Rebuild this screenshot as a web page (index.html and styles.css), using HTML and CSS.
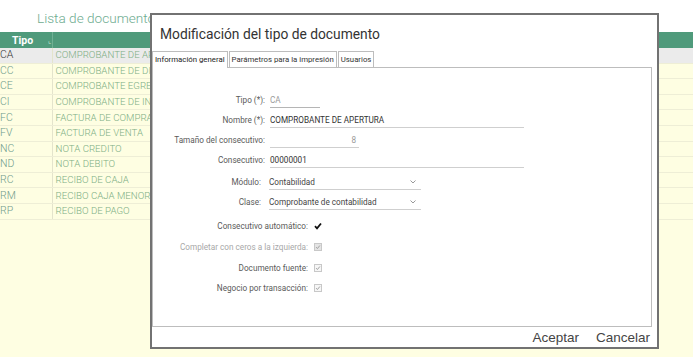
FILE: index.html
```html
<!DOCTYPE html>
<html lang="es">
<head>
    <meta charset="UTF-8">
    <title>Tipos de documento</title>
    <link rel="stylesheet" href="styles.css">
</head>
<body>
    <div class="page">
        <h1 class="list-title">Lista de documentos</h1>
        <table class="grid">
            <thead>
                <tr>
                    <th class="col-code">Tipo <span class="sort">&#8990;</span></th>
                    <th></th>
                </tr>
            </thead>
            <tbody>
                <tr class="selected"><td class="code">CA</td><td>COMPROBANTE DE APERTURA</td></tr>
                <tr><td class="code">CC</td><td>COMPROBANTE DE DIARIO</td></tr>
                <tr><td class="code">CE</td><td>COMPROBANTE EGRESO</td></tr>
                <tr><td class="code">CI</td><td>COMPROBANTE DE INGRESO</td></tr>
                <tr><td class="code">FC</td><td>FACTURA DE COMPRA</td></tr>
                <tr><td class="code">FV</td><td>FACTURA DE VENTA</td></tr>
                <tr><td class="code">NC</td><td>NOTA CREDITO</td></tr>
                <tr><td class="code">ND</td><td>NOTA DEBITO</td></tr>
                <tr><td class="code">RC</td><td>RECIBO DE CAJA</td></tr>
                <tr><td class="code">RM</td><td>RECIBO CAJA MENOR</td></tr>
                <tr><td class="code">RP</td><td>RECIBO DE PAGO</td></tr>
            </tbody>
        </table>
    </div>

    <div class="dialog">
        <h2 class="dialog-title">Modificación del tipo de documento</h2>
        <div class="tabs">
            <span class="tab active">Información general</span>
            <span class="tab">Parámetros para la impresión</span>
            <span class="tab">Usuarios</span>
        </div>
        <div class="panel">
            <div class="form">
                <div class="row">
                    <label>Tipo (*):</label>
                    <span class="field short muted">CA</span>
                </div>
                <div class="row">
                    <label>Nombre (*):</label>
                    <span class="field wide">COMPROBANTE DE APERTURA</span>
                </div>
                <div class="row">
                    <label>Tamaño del consecutivo:</label>
                    <span class="field medium muted number">8</span>
                </div>
                <div class="row">
                    <label>Consecutivo:</label>
                    <span class="field wide">00000001</span>
                </div>
                <div class="row select-row first-select">
                    <label>Módulo:</label>
                    <span class="field select">Contabilidad
                        <svg class="chevron" width="6" height="4" viewBox="0 0 6 4"><path d="M0.5 0.5 L3 3 L5.5 0.5" fill="none" stroke="#999" stroke-width="1"/></svg>
                    </span>
                </div>
                <div class="row select-row">
                    <label>Clase:</label>
                    <span class="field select">Comprobante de contabilidad
                        <svg class="chevron" width="6" height="4" viewBox="0 0 6 4"><path d="M0.5 0.5 L3 3 L5.5 0.5" fill="none" stroke="#999" stroke-width="1"/></svg>
                    </span>
                </div>

                <div class="checks">
                    <div class="check-row">
                        <label>Consecutivo automático:</label>
                        <span class="box on">
                            <svg width="8" height="8" viewBox="0 0 8 8"><path d="M1 4.2 L3 6.3 L7 1.5" fill="none" stroke="#111" stroke-width="1.8"/></svg>
                        </span>
                    </div>
                    <div class="check-row disabled">
                        <label>Completar con ceros a la izquierda:</label>
                        <span class="box off filled">
                            <svg width="8" height="8" viewBox="0 0 8 8"><path d="M1.5 4.2 L3.2 6 L6.5 2" fill="none" stroke="#999" stroke-width="1.2"/></svg>
                        </span>
                    </div>
                    <div class="check-row">
                        <label>Documento fuente:</label>
                        <span class="box off">
                            <svg width="8" height="8" viewBox="0 0 8 8"><path d="M1.5 4.2 L3.2 6 L6.5 2" fill="none" stroke="#999" stroke-width="1.2"/></svg>
                        </span>
                    </div>
                    <div class="check-row">
                        <label>Negocio por transacción:</label>
                        <span class="box off">
                            <svg width="8" height="8" viewBox="0 0 8 8"><path d="M1.5 4.2 L3.2 6 L6.5 2" fill="none" stroke="#999" stroke-width="1.2"/></svg>
                        </span>
                    </div>
                </div>
            </div>
        </div>
        <div class="actions">
            <button class="link-btn">Aceptar</button>
            <button class="link-btn">Cancelar</button>
        </div>
    </div>
</body>
</html>
```

FILE: styles.css
```css
body {
    margin: 0;
    padding: 0;
    font-family: Roboto, "Liberation Sans", sans-serif;
    background-color: #fefee2;
    width: 693px;
    height: 357px;
    overflow: hidden;
    position: relative;
}

.page {
    background-color: #fefee2;
}

.list-title {
    margin: 0;
    height: 32px;
    padding-left: 37px;
    line-height: 36px;
    font-size: 13.6px;
    font-weight: 300;
    color: #6eac90;
    background-color: #fff;
}

/* list of documents */

.grid {
    width: 100%;
    border-collapse: collapse;
    table-layout: fixed;
}

.grid th {
    height: 16px;
    padding: 0;
    background-color: #4f9a7b;
    color: #fff;
    font-size: 10.5px;
    font-weight: bold;
    text-align: left;
}

.grid th.col-code {
    width: 52px;
    padding-left: 12px;
    box-sizing: border-box;
    border-right: 1px solid #6fb094;
}

.sort {
    display: inline-block;
    margin-left: 12px;
    font-size: 7px;
    font-weight: normal;
    color: #cde5d9;
    vertical-align: 1px;
}

.grid td {
    height: 14.6px;
    padding: 0 0 0 3px;
    line-height: 14px;
    font-size: 9.7px;
    font-weight: 300;
    color: #7dae84;
    border-bottom: 1px solid #eeeed6;
    white-space: nowrap;
    overflow: hidden;
}

.grid td.code {
    padding-left: 0;
    color: #6f9c8c;
    font-size: 10.5px;
    border-right: 1px solid #e4e4cc;
}

.grid tr.selected td {
    background-color: #ebebeb;
}

.grid tr.selected td.code {
    color: #333;
}

/* modal */

.dialog {
    position: absolute;
    left: 150px;
    top: 13px;
    width: 505px;
    height: 332px;
    border: 2px solid #727272;
    background-color: #fff;
    display: flex;
    flex-direction: column;
}

.dialog-title {
    margin: 0;
    height: 36px;
    padding-left: 8px;
    line-height: 38px;
    font-size: 13.8px;
    font-weight: normal;
    color: #333;
}

.tabs {
    display: flex;
    align-items: flex-end;
    height: 16px;
    gap: 1px;
}

.tab {
    height: 15px;
    line-height: 15px;
    padding: 0 2px;
    font-size: 7.8px;
    color: #333;
    border: 1px solid #bdbdbd;
    border-bottom: none;
}

.tab.active {
    height: 16px;
    padding: 0 2px;
    color: #222;
    position: relative;
    top: 1px;
    background-color: #fff;
}

.panel {
    height: 258px;
    margin-right: 5px;
    border: 1px solid #bdbdbd;
}

.form {
    padding-top: 22px;
}

.row {
    display: flex;
    align-items: center;
    height: 20px;
    gap: 5px;
}

.row label {
    width: 112px;
    text-align: right;
    font-size: 8.2px;
    color: #5a5a5a;
}

.field {
    box-sizing: border-box;
    height: 14px;
    line-height: 13px;
    margin-top: 1px;
    font-size: 8.2px;
    color: #333;
    border-bottom: 1px solid #cfcfcf;
    white-space: nowrap;
}

.field.short {
    width: 50px;
    border-bottom-color: #b5b5b5;
}

.field.medium {
    width: 89px;
}

.field.wide {
    width: 254px;
}

.field.muted {
    color: #9a9a9a;
}

.field.number {
    text-align: right;
    padding-right: 3px;
}

.select-row label {
    width: 108px;
}

.select-row {
    gap: 8px;
}

.first-select {
    margin-top: 2px;
}

.field.select {
    width: 152px;
    display: flex;
    justify-content: space-between;
    align-items: center;
    padding-right: 5px;
    color: #444;
}

.checks {
    margin-top: 4px;
}

.check-row {
    display: flex;
    align-items: center;
    height: 20.7px;
    gap: 6px;
}

.check-row label {
    width: 155px;
    text-align: right;
    font-size: 8.2px;
    color: #5a5a5a;
}

.check-row.disabled label {
    color: #a8a8a8;
}

.box {
    width: 8px;
    height: 8px;
    box-sizing: border-box;
    display: flex;
    align-items: center;
    justify-content: center;
}

.box.off {
    border: 1px solid #c8c8c8;
    background-color: #f6f6f6;
}

.box.filled {
    background-color: #e4e4e4;
}

.box svg {
    display: block;
}

.actions {
    flex: 1;
    display: flex;
    justify-content: flex-end;
    align-items: center;
    gap: 17px;
    padding-right: 7px;
}

.link-btn {
    padding: 0;
    border: none;
    background: none;
    font-family: "Liberation Sans", Arial, sans-serif;
    font-size: 13.5px;
    color: #444;
}
```
